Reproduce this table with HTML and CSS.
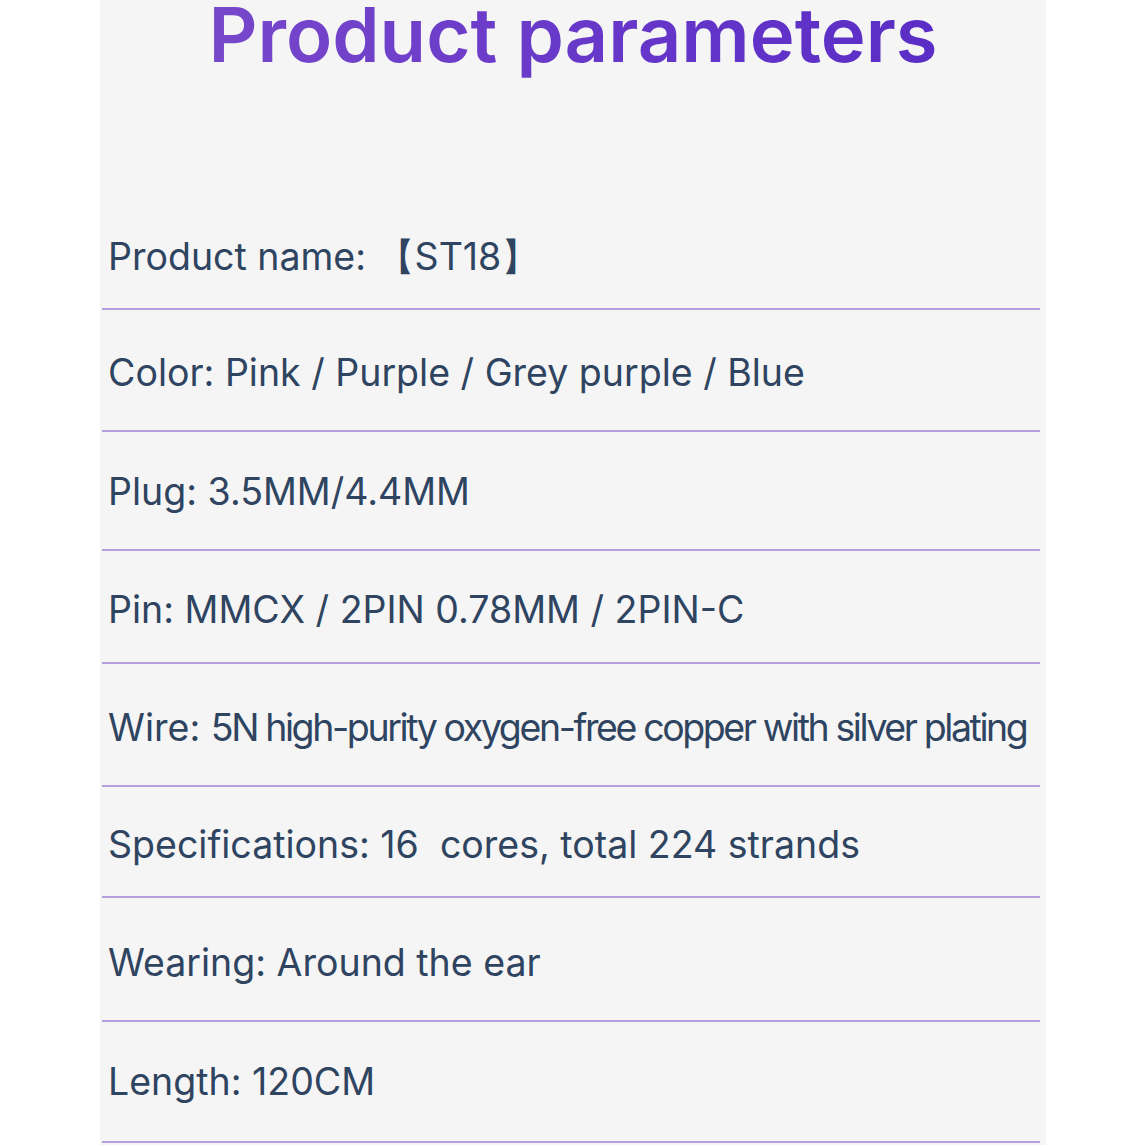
FILE: index.html
```html
<!DOCTYPE html>
<html lang="en">
<head>
<meta charset="utf-8">
<title>Product parameters</title>
<link rel="stylesheet" href="styles.css">
</head>
<body>
<main class="panel">
  <header class="head">
    <h1 class="title">Product parameters</h1>
  </header>
  <ul class="params">
    <li class="row r1"><span class="text">Product name: 【ST18】</span></li>
    <li class="row r2"><span class="text">Color: Pink / Purple / Grey purple / Blue</span></li>
    <li class="row r3"><span class="text">Plug: 3.5MM/4.4MM</span></li>
    <li class="row r4"><span class="text">Pin: MMCX / 2PIN 0.78MM / 2PIN-C</span></li>
    <li class="row r5"><span class="text">Wire: <span class="tight">5N high-purity oxygen-free copper with silver plating</span></span></li>
    <li class="row r6"><span class="text">Specifications: 16&nbsp; cores, total 224 strands</span></li>
    <li class="row r7"><span class="text">Wearing: Around the ear</span></li>
    <li class="row r8"><span class="text">Length: 120CM</span></li>
  </ul>
</main>
</body>
</html>
```

FILE: styles.css
```css
html, body {
  margin: 0;
  padding: 0;
  background: #ffffff;
}
body {
  width: 1145px;
  height: 1145px;
  overflow: hidden;
}
.panel {
  margin-left: 100px;
  width: 946px;
  height: 1145px;
  background: #f5f5f5;
  font-family: Inter, "Noto Sans", "Liberation Sans", sans-serif;
}
.head {
  height: 191px;
  display: flex;
  justify-content: center;
  align-items: flex-start;
}
.title {
  margin: 0;
  padding-bottom: 24px;
  font-size: 76px;
  font-weight: 600;
  line-height: 69px;
  letter-spacing: 0;
  background: linear-gradient(90deg, #7748ca 0%, #6838c9 50%, #5a2dc6 100%);
  -webkit-background-clip: text;
  background-clip: text;
  color: transparent;
}
.params {
  list-style: none;
  margin: 0;
  padding: 0;
}
.row {
  display: flex;
  align-items: center;
  margin-left: 2px;
  width: 938px;
  border-bottom: 2px solid #b49edc;
  box-sizing: border-box;
}
.text {
  padding-left: 6px;
  font-size: 37.5px;
  color: #2e4460;
  white-space: nowrap;
}
.tight {
  letter-spacing: -2.4px;
}
.r1 { height: 119px; padding-top: 16px; }
.r2 { height: 122px; padding-top: 4px; }
.r3 { height: 119px; padding-top: 2px; }
.r4 { height: 113px; padding-top: 6px; }
.r5 { height: 123px; padding-top: 6px; }
.r6 { height: 111px; padding-top: 6px; }
.r7 { height: 124px; padding-top: 6px; }
.r8 { height: 121px; }
```
